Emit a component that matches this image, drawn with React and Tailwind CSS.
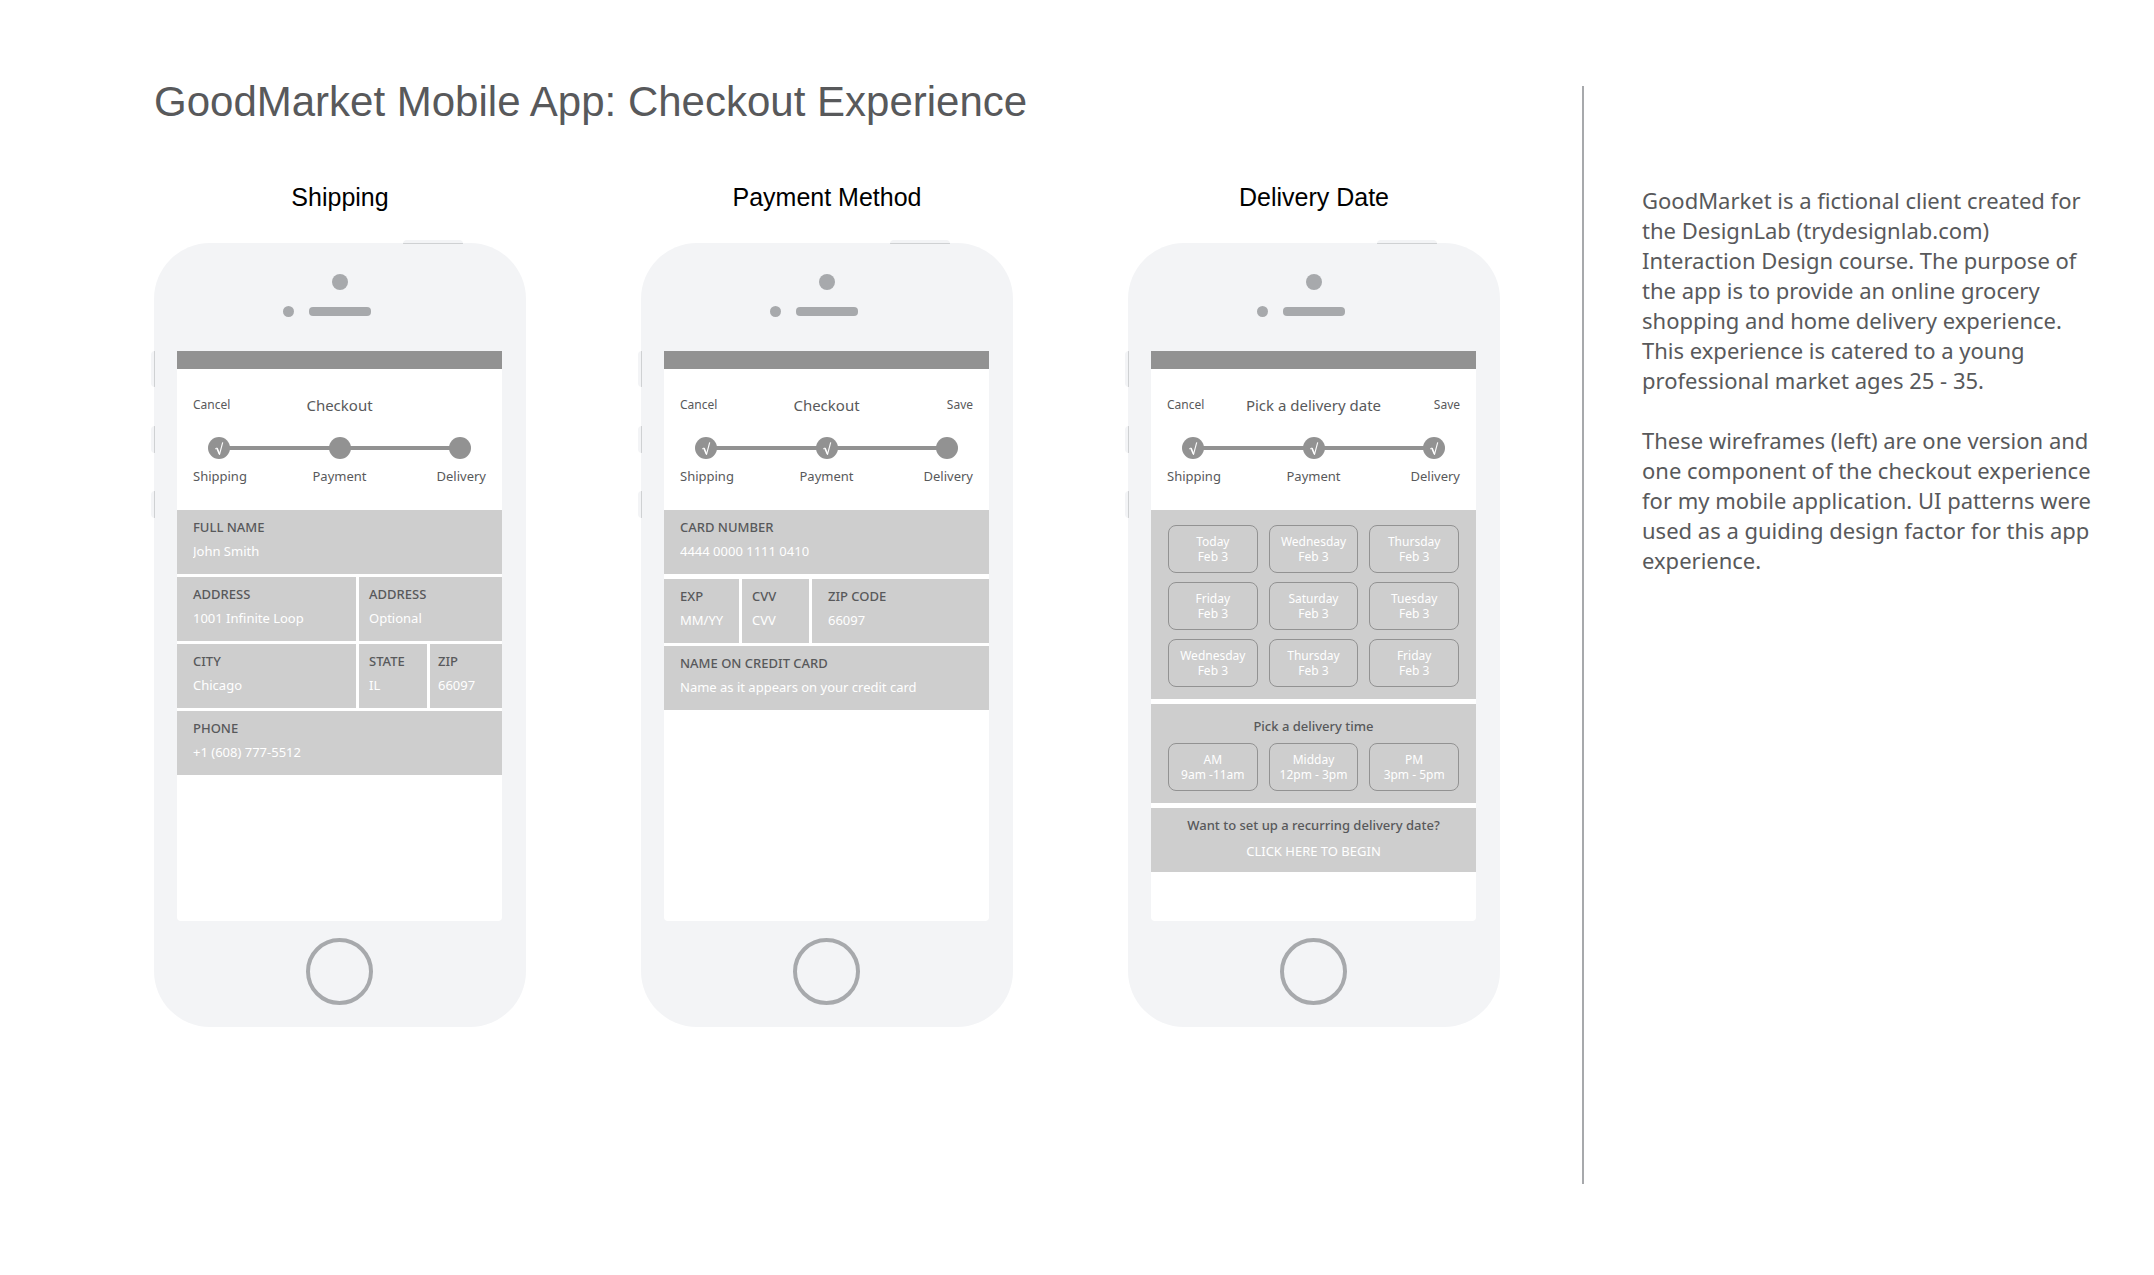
import React from "react";

function Tick() {
  return (
    <svg viewBox="0 0 22 22" className="size-[22px]" fill="none" stroke="#fff" aria-hidden="true">
      <path d="M7.2 11.9 L8.9 11" strokeWidth="1" />
      <path d="M8.9 11 L11.4 17" strokeWidth="1.7" />
      <path d="M11.4 17.8 L14.7 5.4" strokeWidth="1.1" />
    </svg>
  );
}

function Steps({ done }) {
  const steps = ["Shipping", "Payment", "Delivery"];
  return (
    <div className="px-4">
      <div className="relative px-[15px]">
        <div className="absolute inset-x-6 top-[9px] h-1 bg-[#929292]" />
        <ol className="relative flex justify-between">
          {steps.map((s, i) => (
            <li key={s} aria-label={s} className="size-[22px] rounded-full bg-[#929292]">
              {i < done && <Tick />}
            </li>
          ))}
        </ol>
      </div>
      <div className="mt-[7px] grid grid-cols-3 text-[13px] leading-5 text-[#58595b]">
        <span>Shipping</span>
        <span className="text-center">Payment</span>
        <span className="text-right">Delivery</span>
      </div>
    </div>
  );
}

function Phone({ heading, title, save, done, children }) {
  return (
    <section className="w-full max-w-[372px]">
      <h2 className="text-center font-['Liberation_Sans',Arial,sans-serif] text-[25px] leading-8 text-black">
        {heading}
      </h2>
      <div className="relative mt-[30px] flex h-[784px] flex-col rounded-[56px] bg-[#f3f4f6] pr-6 pl-[23px]">
        <div className="absolute -top-[3px] right-[63px] h-1 w-[60px] rounded-t-sm border-b border-[#cfd1d3] bg-[#f3f4f6]" />
        <div className="absolute top-[108px] -left-[3px] h-9 w-1 rounded-l-sm border-r border-[#cfd1d3] bg-[#f3f4f6]" />
        <div className="absolute top-[183px] -left-[3px] h-[27px] w-1 rounded-l-sm border-r border-[#cfd1d3] bg-[#f3f4f6]" />
        <div className="absolute top-[248px] -left-[3px] h-[27px] w-1 rounded-l-sm border-r border-[#cfd1d3] bg-[#f3f4f6]" />

        <div className="flex h-[108px] shrink-0 flex-col items-center pt-[31px]">
          <div className="size-4 rounded-full bg-[#a7a9ac]" />
          <div className="mt-4 mr-[26px] flex items-center gap-[15px]">
            <div className="size-[11px] rounded-full bg-[#a7a9ac]" />
            <div className="h-[9px] w-[62px] rounded bg-[#a7a9ac]" />
          </div>
        </div>

        <div className="flex-1 rounded-b bg-white font-['Noto_Sans',sans-serif]">
          <div className="h-[18px] bg-[#929292]" />
          <div className="mt-6 grid grid-cols-[1fr_auto_1fr] items-center px-4 text-xs leading-6 text-[#58595b]">
            <button type="button" className="justify-self-start">Cancel</button>
            <h3 className="text-[15px] leading-6">{title}</h3>
            {save && <button type="button" className="justify-self-end">Save</button>}
          </div>
          <div className="mt-5">
            <Steps done={done} />
          </div>
          <div className="mt-6">{children}</div>
        </div>

        <div className="flex h-[106px] shrink-0 justify-center pt-[17px]">
          <button
            type="button"
            aria-label="Home"
            className="size-[67px] rounded-full border-4 border-[#a7a9ac]"
          />
        </div>
      </div>
    </section>
  );
}

function Field({ id, label, value, placeholder, className = "pl-4" }) {
  return (
    <div className={"h-16 min-w-0 bg-[#cecece] pt-2 text-[13px] " + className}>
      <label htmlFor={id} className="block leading-[18px] font-medium whitespace-nowrap text-[#58595b]">
        {label}
      </label>
      <input
        id={id}
        defaultValue={value}
        placeholder={placeholder}
        className="mt-1.5 block h-[18px] w-full bg-transparent leading-[18px] text-white outline-none placeholder:text-white placeholder:opacity-100"
      />
    </div>
  );
}

function Slot({ top, bottom }) {
  return (
    <button
      type="button"
      className="h-12 rounded-lg border border-[#929292] text-xs leading-[15px] text-white"
    >
      {top}
      <br />
      {bottom}
    </button>
  );
}

const days = ["Today", "Wednesday", "Thursday", "Friday", "Saturday", "Tuesday", "Wednesday", "Thursday", "Friday"];

const times = [
  ["AM", "9am -11am"],
  ["Midday", "12pm - 3pm"],
  ["PM", "3pm - 5pm"],
];

export default function App() {
  return (
    <div className="flex min-h-screen bg-white pt-[86px] pb-[91px]">
      <main className="min-w-0 flex-1 pr-[82px] pl-[154px]">
        <h1 className="-mt-2 font-['Liberation_Sans',Arial,sans-serif] text-[42px] leading-[48px] text-[#58595b]">
          GoodMarket Mobile App: Checkout Experience
        </h1>

        <div className="mt-[55px] flex justify-between gap-6">
          <Phone heading="Shipping" title="Checkout" done={1}>
            <form className="grid gap-[3px]">
              <Field id="name" label="FULL NAME" value="John Smith" />
              <div className="grid grid-cols-[179fr_143fr] gap-[3px]">
                <Field id="address1" label="ADDRESS" value="1001 Infinite Loop" />
                <Field id="address2" label="ADDRESS" placeholder="Optional" className="pl-2.5" />
              </div>
              <div className="grid grid-cols-[179fr_68fr_72fr] gap-[3px]">
                <Field id="city" label="CITY" value="Chicago" />
                <Field id="state" label="STATE" value="IL" className="pl-2.5" />
                <Field id="zip" label="ZIP" value="66097" className="pl-2" />
              </div>
              <Field id="phone" label="PHONE" value="+1 (608) 777-5512" />
            </form>
          </Phone>

          <Phone heading="Payment Method" title="Checkout" save done={2}>
            <form>
              <Field id="card" label="CARD NUMBER" value="4444 0000 1111 0410" />
              <div className="mt-[5px] mb-[3px] grid grid-cols-[75fr_67fr_177fr] gap-[3px]">
                <Field id="exp" label="EXP" placeholder="MM/YY" />
                <Field id="cvv" label="CVV" placeholder="CVV" className="pl-2.5" />
                <Field id="billing-zip" label="ZIP CODE" value="66097" />
              </div>
              <Field id="holder" label="NAME ON CREDIT CARD" placeholder="Name as it appears on your credit card" />
            </form>
          </Phone>

          <Phone heading="Delivery Date" title="Pick a delivery date" save done={3}>
            <div className="grid gap-[5px]">
              <div className="grid grid-cols-3 gap-x-[11px] gap-y-[9px] bg-[#cecece] px-[17px] pt-[15px] pb-3">
                {days.map((d, i) => (
                  <Slot key={i} top={d} bottom="Feb 3" />
                ))}
              </div>
              <div className="bg-[#cecece] px-[17px] pt-3 pb-3">
                <h4 className="text-center text-[13px] leading-5 font-medium text-[#58595b]">Pick a delivery time</h4>
                <div className="mt-[7px] grid grid-cols-3 gap-[11px]">
                  {times.map(([a, b]) => (
                    <Slot key={a} top={a} bottom={b} />
                  ))}
                </div>
              </div>
              <div className="flex h-16 flex-col items-center bg-[#cecece] pt-2 text-[13px] leading-[18px]">
                <p className="font-medium text-[#58595b]">Want to set up a recurring delivery date?</p>
                <button type="button" className="mt-2 text-white">CLICK HERE TO BEGIN</button>
              </div>
            </div>
          </Phone>
        </div>
      </main>

      <aside className="w-[572px] shrink-0 border-l-2 border-[#a7a9ac] pt-[99px] pr-12 pl-[58px] font-['Noto_Sans',sans-serif] text-[22px] leading-[30px] text-[#58595b]">
        <p>
          GoodMarket is a fictional client created for the DesignLab (trydesignlab.com) Interaction Design course. The
          purpose of the app is to provide an online grocery shopping and home delivery experience. This experience is
          catered to a young professional market ages 25 - 35.
        </p>
        <p className="mt-[30px]">
          These wireframes (left) are one version and one component of the checkout experience for my mobile
          application. UI patterns were used as a guiding design factor for this app experience.
        </p>
      </aside>
    </div>
  );
}
